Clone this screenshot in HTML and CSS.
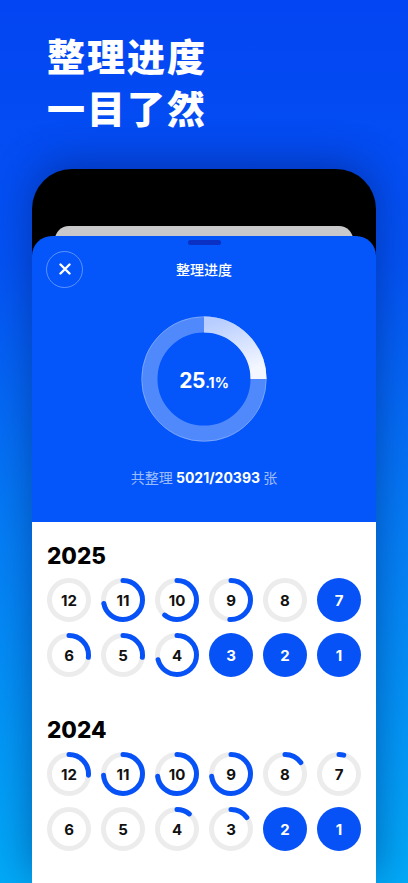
FILE: index.html
```html
<!DOCTYPE html>
<html lang="zh">
<head>
<meta charset="utf-8">
<link rel="stylesheet" href="styles.css">
</head>
<body>
<div class="page">
  <h1 class="hero">整理进度<br>一目了然</h1>
  <div class="phone">
    <div class="back-card"></div>
    <div class="sheet">
      <div class="sheet-top">
        <div class="handle"></div>
        <div class="header">
          <button class="close" aria-label="关闭">
            <svg width="12" height="12" viewBox="0 0 12 12"><path d="M1.5 1.5 L10.5 10.5 M10.5 1.5 L1.5 10.5" stroke="#fff" stroke-width="2.4" stroke-linecap="round"/></svg>
          </button>
          <div class="title">整理进度</div>
          <div></div>
        </div>
        <div class="ring">
          <svg class="ring-svg" width="126" height="126" viewBox="0 0 126 126">
            <defs>
              <linearGradient id="pg" x1="0" y1="0" x2="0.3" y2="1">
                <stop offset="0" stop-color="#b7cdff"/>
                <stop offset="1" stop-color="#f4f7ff"/>
              </linearGradient>
            </defs>
            <circle cx="63" cy="63" r="54.5" fill="none" stroke="rgba(255,255,255,0.3)" stroke-width="16"/>
            <circle cx="63" cy="63" r="62.3" fill="none" stroke="rgba(255,255,255,0.25)" stroke-width="1"/>
            <path d="M63 8.5 A54.5 54.5 0 0 1 117.5 63" fill="none" stroke="url(#pg)" stroke-width="16"/>
          </svg>
          <div class="ring-label"><span class="big">25</span><span class="small">.1%</span></div>
        </div>
        <p class="stats">共整理 <b>5021/20393</b> 张</p>
      </div>
      <div class="panel">
        <section class="year">
          <h2>2025</h2>
          <div class="months">
            <div class="m"><svg viewBox="0 0 44 44"><circle class="track" cx="22" cy="22" r="19.5"/></svg><span>12</span></div>
            <div class="m"><svg viewBox="0 0 44 44"><circle class="track" cx="22" cy="22" r="19.5"/><circle class="prog" cx="22" cy="22" r="19.5" pathLength="100" stroke-dasharray="72 100"/></svg><span>11</span></div>
            <div class="m"><svg viewBox="0 0 44 44"><circle class="track" cx="22" cy="22" r="19.5"/><circle class="prog" cx="22" cy="22" r="19.5" pathLength="100" stroke-dasharray="61 100"/></svg><span>10</span></div>
            <div class="m"><svg viewBox="0 0 44 44"><circle class="track" cx="22" cy="22" r="19.5"/><circle class="prog" cx="22" cy="22" r="19.5" pathLength="100" stroke-dasharray="51 100"/></svg><span>9</span></div>
            <div class="m"><svg viewBox="0 0 44 44"><circle class="track" cx="22" cy="22" r="19.5"/></svg><span>8</span></div>
            <div class="m full"><span>7</span></div>
            <div class="m"><svg viewBox="0 0 44 44"><circle class="track" cx="22" cy="22" r="19.5"/><circle class="prog" cx="22" cy="22" r="19.5" pathLength="100" stroke-dasharray="27 100"/></svg><span>6</span></div>
            <div class="m"><svg viewBox="0 0 44 44"><circle class="track" cx="22" cy="22" r="19.5"/><circle class="prog" cx="22" cy="22" r="19.5" pathLength="100" stroke-dasharray="27 100"/></svg><span>5</span></div>
            <div class="m"><svg viewBox="0 0 44 44"><circle class="track" cx="22" cy="22" r="19.5"/><circle class="prog" cx="22" cy="22" r="19.5" pathLength="100" stroke-dasharray="71 100"/></svg><span>4</span></div>
            <div class="m full"><span>3</span></div>
            <div class="m full"><span>2</span></div>
            <div class="m full"><span>1</span></div>
          </div>
        </section>
        <section class="year">
          <h2>2024</h2>
          <div class="months">
            <div class="m"><svg viewBox="0 0 44 44"><circle class="track" cx="22" cy="22" r="19.5"/><circle class="prog" cx="22" cy="22" r="19.5" pathLength="100" stroke-dasharray="26 100"/></svg><span>12</span></div>
            <div class="m"><svg viewBox="0 0 44 44"><circle class="track" cx="22" cy="22" r="19.5"/><circle class="prog" cx="22" cy="22" r="19.5" pathLength="100" stroke-dasharray="74 100"/></svg><span>11</span></div>
            <div class="m"><svg viewBox="0 0 44 44"><circle class="track" cx="22" cy="22" r="19.5"/><circle class="prog" cx="22" cy="22" r="19.5" pathLength="100" stroke-dasharray="73 100"/></svg><span>10</span></div>
            <div class="m"><svg viewBox="0 0 44 44"><circle class="track" cx="22" cy="22" r="19.5"/><circle class="prog" cx="22" cy="22" r="19.5" pathLength="100" stroke-dasharray="73 100"/></svg><span>9</span></div>
            <div class="m"><svg viewBox="0 0 44 44"><circle class="track" cx="22" cy="22" r="19.5"/><circle class="prog" cx="22" cy="22" r="19.5" pathLength="100" stroke-dasharray="15 100"/></svg><span>8</span></div>
            <div class="m"><svg viewBox="0 0 44 44"><circle class="track" cx="22" cy="22" r="19.5"/><circle class="prog" cx="22" cy="22" r="19.5" pathLength="100" stroke-dasharray="4 100"/></svg><span>7</span></div>
            <div class="m"><svg viewBox="0 0 44 44"><circle class="track" cx="22" cy="22" r="19.5"/></svg><span>6</span></div>
            <div class="m"><svg viewBox="0 0 44 44"><circle class="track" cx="22" cy="22" r="19.5"/></svg><span>5</span></div>
            <div class="m"><svg viewBox="0 0 44 44"><circle class="track" cx="22" cy="22" r="19.5"/><circle class="prog" cx="22" cy="22" r="19.5" pathLength="100" stroke-dasharray="11 100"/></svg><span>4</span></div>
            <div class="m"><svg viewBox="0 0 44 44"><circle class="track" cx="22" cy="22" r="19.5"/><circle class="prog" cx="22" cy="22" r="19.5" pathLength="100" stroke-dasharray="15 100"/></svg><span>3</span></div>
            <div class="m full"><span>2</span></div>
            <div class="m full"><span>1</span></div>
          </div>
        </section>
      </div>
    </div>
  </div>
</div>
</body>
</html>
```

FILE: styles.css
```css
* { box-sizing: border-box; }
html, body { margin: 0; padding: 0; }
body {
  width: 408px;
  height: 883px;
  overflow: hidden;
  font-family: Inter, "Noto Sans CJK SC", sans-serif;
  background: linear-gradient(180deg, #0345f2 0%, #0453f4 30%, #0580f6 62%, #02aaf7 100%);
}
.page {
  display: flex;
  flex-direction: column;
  height: 883px;
}
.hero {
  margin: 0;
  padding: 29px 0 0 47px;
  font-family: "Noto Sans CJK SC", sans-serif;
  font-weight: 900;
  font-size: 38px;
  line-height: 52px;
  letter-spacing: 2px;
  color: #fff;
}
.phone {
  margin: 36px 32px 0;
  flex: 1;
  background: #000;
  border-radius: 40px 40px 0 0;
  padding-top: 57px;
  box-shadow: 0 -6px 40px rgba(0, 20, 90, 0.45);
  display: flex;
  flex-direction: column;
}
.back-card {
  height: 14px;
  margin: 0 23px -4px;
  background: #c9c9cc;
  border-radius: 18px 18px 0 0;
}
.sheet {
  flex: 1;
  border-radius: 20px 20px 0 0;
  background: #0456fb;
  display: flex;
  flex-direction: column;
  overflow: hidden;
}
.sheet-top {
  padding: 4px 14px 35px;
  display: flex;
  flex-direction: column;
  align-items: center;
}
.handle {
  width: 33px;
  height: 5px;
  border-radius: 3px;
  background: #0b30c4;
}
.header {
  width: 100%;
  margin-top: 4px;
  display: grid;
  grid-template-columns: 1fr auto 1fr;
  align-items: center;
  height: 40px;
}
.close {
  width: 37px;
  height: 37px;
  border-radius: 50%;
  border: 1px solid rgba(255, 255, 255, 0.35);
  background: transparent;
  display: flex;
  align-items: center;
  justify-content: center;
  padding: 0;
}
.title {
  font-family: "Noto Sans CJK SC", sans-serif;
  font-size: 14px;
  font-weight: 500;
  color: #fff;
}
.ring {
  margin-top: 27px;
  width: 126px;
  height: 126px;
  display: grid;
  place-items: center;
}
.ring-svg, .ring-label { grid-area: 1 / 1; }
.ring-label {
  color: #fff;
  font-weight: 700;
  display: flex;
  align-items: baseline;
  margin-top: 2px;
}
.ring-label .big { font-size: 21px; letter-spacing: -0.3px; }
.ring-label .small { font-size: 14px; }
.stats {
  margin: 26px 0 0;
  font-family: "Noto Sans CJK SC", sans-serif;
  font-size: 14px;
  line-height: 18px;
  color: rgba(255, 255, 255, 0.62);
}
.stats b {
  font-family: Inter, sans-serif;
  color: #fff;
  font-weight: 700;
  font-size: 14px;
}
.panel {
  flex: 1;
  background: #fff;
  padding: 20px 15px 0;
}
.year + .year { margin-top: 39px; }
.year h2 {
  margin: 0 0 8px;
  font-size: 22.5px;
  line-height: 28px;
  font-weight: 800;
  color: #000;
}
.months {
  display: grid;
  grid-template-columns: repeat(6, 44px);
  column-gap: 10px;
  row-gap: 11px;
}
.m {
  width: 44px;
  height: 44px;
  display: grid;
  place-items: center;
  border-radius: 50%;
}
.m svg {
  grid-area: 1 / 1;
  width: 44px;
  height: 44px;
  transform: rotate(-90deg);
}
.m span {
  grid-area: 1 / 1;
  font-size: 15px;
  font-weight: 700;
  color: #111;
}
.m.full { background: #0752f6; }
.m.full span { color: #fff; }
.track {
  fill: none;
  stroke: #ececec;
  stroke-width: 5;
}
.prog {
  fill: none;
  stroke: #0752f6;
  stroke-width: 5;
  stroke-linecap: round;
}
```
